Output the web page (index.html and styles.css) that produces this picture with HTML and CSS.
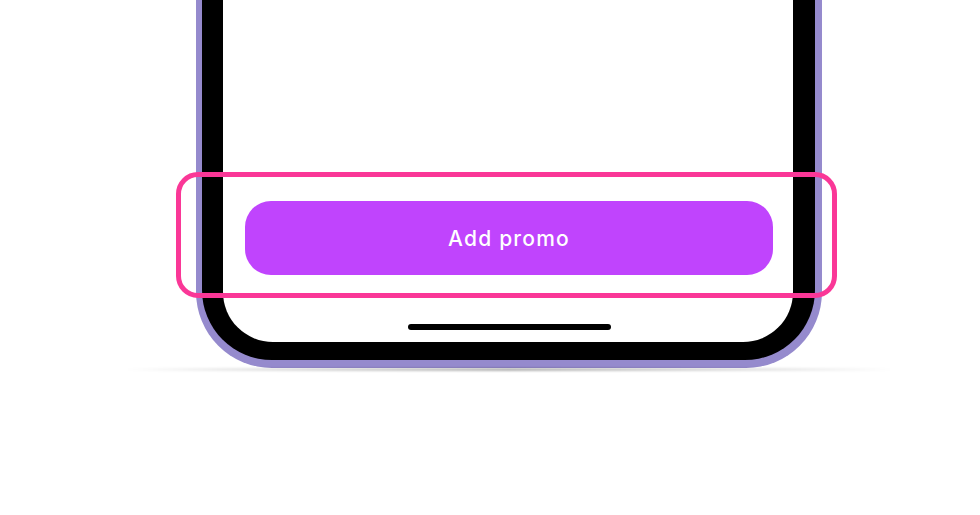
FILE: index.html
```html
<!DOCTYPE html>
<html>
<head>
<meta charset="utf-8">
<link rel="stylesheet" href="styles.css">
</head>
<body>
<div class="stage">
  <div class="phone">
    <div class="bezel">
      <div class="screen">
        <button class="promo-btn">Add promo</button>
        <div class="home-indicator"></div>
      </div>
    </div>
  </div>
  <div class="highlight"></div>
</div>
</body>
</html>
```
FILE: styles.css
```css
html, body {
  margin: 0;
  padding: 0;
  background: #ffffff;
}
.stage {
  position: relative;
  width: 980px;
  height: 515px;
  overflow: hidden;
  background: #ffffff;
}
.phone {
  position: relative;
  box-sizing: border-box;
  width: 626px;
  height: 408px;
  margin-left: 196px;
  margin-top: -40px;
  padding: 0 7px 8px 6px;
  background: #958acd;
  border-radius: 0 0 76px 76px;
}
.phone::after {
  content: "";
  position: absolute;
  left: -70px;
  right: -70px;
  bottom: -3px;
  height: 3px;
  background: linear-gradient(90deg, rgba(0,0,0,0) 0%, rgba(0,0,0,0.12) 20%, rgba(0,0,0,0.3) 50%, rgba(0,0,0,0.12) 80%, rgba(0,0,0,0) 100%);
  filter: blur(0.8px);
}
.bezel {
  box-sizing: border-box;
  height: 100%;
  padding: 0 22px 18px 21px;
  background: #000000;
  border-radius: 0 0 70px 70px;
}
.screen {
  box-sizing: border-box;
  height: 100%;
  background: #ffffff;
  border-radius: 0 0 50px 50px;
  display: flex;
  flex-direction: column;
  justify-content: flex-end;
  align-items: center;
  padding: 0 20px 12px 22px;
}
.promo-btn {
  width: 528px;
  height: 74px;
  border: none;
  border-radius: 26px;
  background: #c044fd;
  color: #ffffff;
  font-family: "Inter", "Open Sans", sans-serif;
  font-size: 21px;
  font-weight: 500;
  letter-spacing: 1.2px;
  margin-bottom: 49px;
  padding: 0;
}
.home-indicator {
  width: 203px;
  height: 6px;
  border-radius: 3px;
  background: #000000;
}
.highlight {
  position: absolute;
  left: 176px;
  top: 172px;
  width: 661px;
  height: 126px;
  box-sizing: border-box;
  border: 5px solid #fa3797;
  border-radius: 22px;
}
```
